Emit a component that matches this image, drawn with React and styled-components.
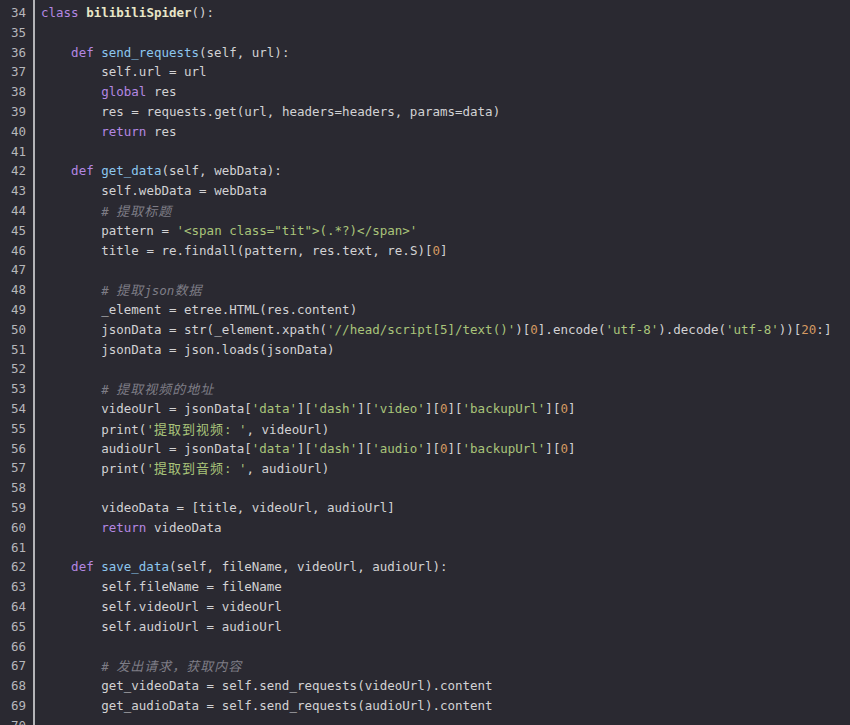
import React from "react"
import styled, { createGlobalStyle } from "styled-components"

const GlobalStyle = createGlobalStyle`
  html, body {
    margin: 0;
    padding: 0;
    background: #2a2931;
    overflow: hidden;
  }
`

const source = [
  "class bilibiliSpider():",
  "",
  "    def send_requests(self, url):",
  "        self.url = url",
  "        global res",
  "        res = requests.get(url, headers=headers, params=data)",
  "        return res",
  "",
  "    def get_data(self, webData):",
  "        self.webData = webData",
  "        # 提取标题",
  "        pattern = '<span class=\"tit\">(.*?)</span>'",
  "        title = re.findall(pattern, res.text, re.S)[0]",
  "",
  "        # 提取json数据",
  "        _element = etree.HTML(res.content)",
  "        jsonData = str(_element.xpath('//head/script[5]/text()')[0].encode('utf-8').decode('utf-8'))[20:]",
  "        jsonData = json.loads(jsonData)",
  "",
  "        # 提取视频的地址",
  "        videoUrl = jsonData['data']['dash']['video'][0]['backupUrl'][0]",
  "        print('提取到视频: ', videoUrl)",
  "        audioUrl = jsonData['data']['dash']['audio'][0]['backupUrl'][0]",
  "        print('提取到音频: ', audioUrl)",
  "",
  "        videoData = [title, videoUrl, audioUrl]",
  "        return videoData",
  "",
  "    def save_data(self, fileName, videoUrl, audioUrl):",
  "        self.fileName = fileName",
  "        self.videoUrl = videoUrl",
  "        self.audioUrl = audioUrl",
  "",
  "        # 发出请求，获取内容",
  "        get_videoData = self.send_requests(videoUrl).content",
  "        get_audioData = self.send_requests(audioUrl).content",
  ""
]

const FIRST_LINE = 34
const KEYWORDS = new Set(["class", "def", "global", "return"])

const colors = {
  text: "#d2d2d4",
  keyword: "#b487e2",
  className: "#e8e6c8",
  func: "#8cc6ee",
  string: "#a9c47a",
  number: "#d49a62",
  comment: "#7e7d86"
}

const Editor = styled.div`
  display: flex;
  align-items: stretch;
  min-height: 100vh;
  font-family: "DejaVu Sans Mono", "Liberation Mono", "Noto Sans CJK SC", monospace;
  font-size: 12.5px;
  line-height: 19.8px;
  background: #2a2931;
`

const Gutter = styled.div`
  display: flex;
  flex-direction: column;
  width: 26px;
  padding: 3px 7px 0 0;
  border-right: 2px solid #b4b4b8;
  text-align: right;
  color: #b6b6ba;
`

const Code = styled.div`
  display: flex;
  flex-direction: column;
  padding: 3px 0 0 6px;
  color: ${colors.text};
`

const Line = styled.div`
  height: 19.8px;
  white-space: pre;
`

const Token = styled.span`
  color: ${({ kind }) => colors[kind] || colors.text};
  font-weight: ${({ kind }) => (kind === "className" ? "bold" : "normal")};
  font-style: ${({ kind }) => (kind === "comment" ? "italic" : "normal")};
`

const Wide = styled.span`
  font-family: "Noto Sans CJK SC", sans-serif;
  font-size: 13px;
  letter-spacing: 1px;
`

const CJK = /([\u3000-\u9fff\uff00-\uffef]+)/

const withWide = text =>
  text.split(CJK).map((part, i) =>
    CJK.test(part) ? <Wide key={i}>{part}</Wide> : part
  )

function tokenize(line) {
  const re = /(#.*$)|('[^']*')|(\b\d+\b)|([A-Za-z_]\w*)|(\s+)|(.)/g
  const out = []
  let prev = null
  let m
  while ((m = re.exec(line))) {
    if (m[1]) out.push(["comment", m[1]])
    else if (m[2]) out.push(["string", m[2]])
    else if (m[3]) out.push(["number", m[3]])
    else if (m[4]) {
      const word = m[4]
      if (KEYWORDS.has(word)) out.push(["keyword", word])
      else if (prev === "class") out.push(["className", word])
      else if (prev === "def") out.push(["func", word])
      else out.push(["text", word])
      prev = word
      continue
    } else out.push(["text", m[0]])
    if (!m[5]) prev = null
  }
  return out
}

export default function App() {
  return (
    <>
      <GlobalStyle />
      <Editor>
        <Gutter>
          {source.map((_, i) => (
            <Line key={i}>{FIRST_LINE + i}</Line>
          ))}
        </Gutter>
        <Code>
          {source.map((line, i) => (
            <Line key={i}>
              {tokenize(line).map(([kind, text], j) => (
                <Token key={j} kind={kind}>
                  {withWide(text)}
                </Token>
              ))}
            </Line>
          ))}
        </Code>
      </Editor>
    </>
  )
}
